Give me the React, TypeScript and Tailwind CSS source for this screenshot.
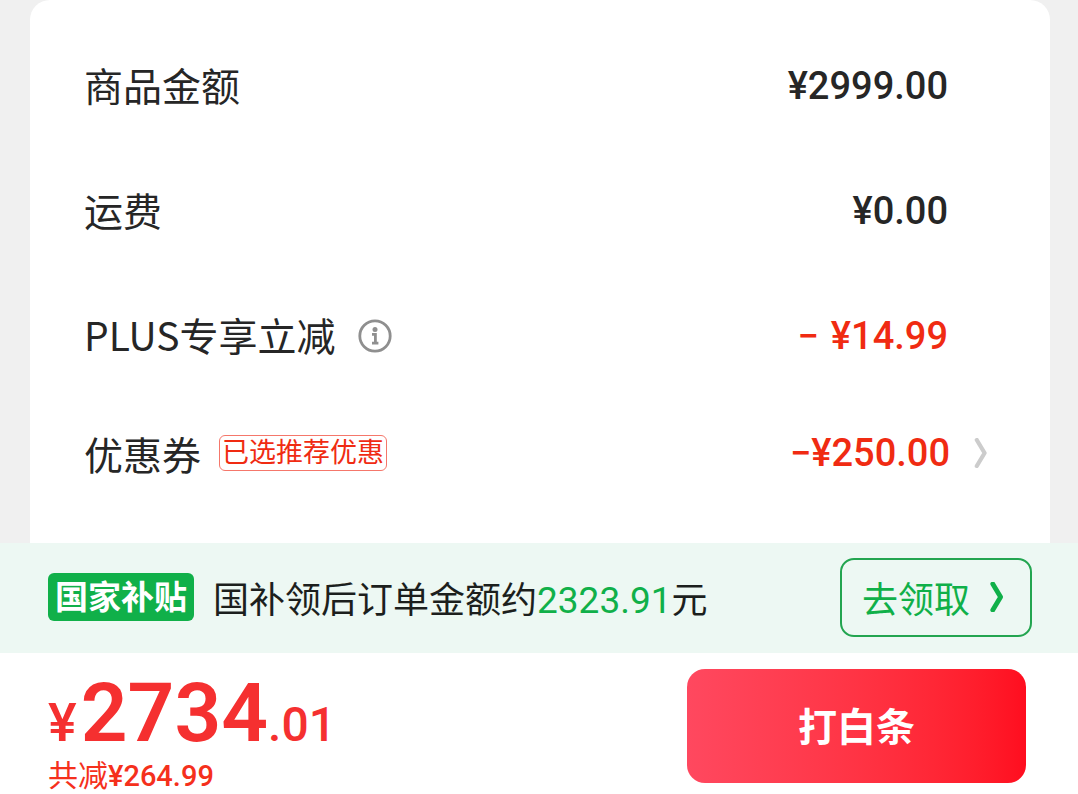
import type { ReactNode } from 'react';

function Amount({ children, red = false }: { children: ReactNode; red?: boolean }) {
  return (
    <dd
      className={`flex items-center whitespace-pre font-['Roboto','Noto_Sans_CJK_SC',sans-serif] text-[38px] font-medium leading-[48px] ${
        red ? 'text-[#f02b12]' : 'text-[#262626]'
      }`}
    >
      {children}
    </dd>
  );
}

function InfoIcon() {
  return (
    <svg viewBox="0 0 34 34" className="size-[34px]" aria-hidden="true">
      <circle cx="17" cy="17" r="15.2" fill="none" stroke="#8f8f8f" strokeWidth="2.8" />
      <circle cx="17" cy="10.6" r="2.5" fill="#8f8f8f" />
      <path d="M14 15.3H17.4V24.2M14 24.2H20.4" fill="none" stroke="#8f8f8f" strokeWidth="2.8" />
    </svg>
  );
}

function Chevron({ className, width }: { className: string; width: number }) {
  return (
    <svg viewBox="0 0 14 30" className={className} aria-hidden="true">
      <path d="M2.8 2L10.6 15L2.8 28" fill="none" stroke="currentColor" strokeWidth={width} strokeLinecap="round" strokeLinejoin="round" />
    </svg>
  );
}

export default function App() {
  return (
    <main className="flex min-h-screen flex-col bg-[#f0f0f0] font-['Noto_Sans_CJK_SC',sans-serif] text-[#262626]">
      <dl className="mr-7 ml-[30px] rounded-t-[20px] bg-white pt-[23px] pr-[102px] pb-[35px] pl-[54px] text-[39px] leading-[56px]">
        <div className="flex h-[125px] items-center justify-between">
          <dt className="pb-1">商品金额</dt>
          <Amount>¥2999.00</Amount>
        </div>
        <div className="flex h-[125px] items-center justify-between">
          <dt className="pb-1">运费</dt>
          <Amount>¥0.00</Amount>
        </div>
        <div className="flex h-[125px] items-center justify-between">
          <dt className="flex items-center gap-[22px]">
            <span className="pb-1">PLUS专享立减</span>
            <button type="button" aria-label="优惠说明">
              <InfoIcon />
            </button>
          </dt>
          <Amount red>
            <span className="mr-3">−</span>¥14.99
          </Amount>
        </div>
        <div className="-mr-10 flex h-[110px] items-center justify-between">
          <dt className="flex items-center gap-[18px]">
            <span>优惠券</span>
            <span className="rounded-md border border-[#f5776b] px-[2px] pb-1 text-[27px] leading-[30px] text-[#f02b12]">已选推荐优惠</span>
          </dt>
          <Amount red>
            −¥250.00
            <button type="button" aria-label="选择优惠券" className="ml-6 text-[#cccccc]">
              <Chevron className="h-[30px] w-[14px]" width={4.2} />
            </button>
          </Amount>
        </div>
      </dl>

      <section className="flex h-[110px] items-center bg-[#edf8f3] pr-[46px] pb-0.5 pl-12">
        <strong className="rounded-md bg-[#10b049] px-[7px] pb-1 text-[33px] leading-[44px] font-bold text-white">国家补贴</strong>
        <p className="ml-[19px] pt-1 text-[36px] leading-[52px] text-[#1c1f1d]">
          国补领后订单金额约
          <span className="font-['Roboto',sans-serif] text-[37px] text-[#10b049]">2323.91</span>元
        </p>
        <button
          type="button"
          className="ml-auto flex h-[79px] w-48 items-center gap-5 rounded-[14px] border-2 border-[#23a550] pl-5 text-[36px] leading-[52px] text-[#10b049]"
        >
          去领取
          <Chevron className="h-[30px] w-[14px]" width={4.8} />
        </button>
      </section>

      <footer className="flex flex-1 items-start justify-between bg-white pt-4 pr-[52px] pl-12">
        <div className="mt-1 text-[#f53030]">
          <p className="flex items-baseline font-['Roboto',sans-serif] text-[48px] leading-[50px] font-medium">
            <span className="text-[54px]">¥</span>
            <span className="ml-1 text-[82px] leading-[80px] font-semibold">2734</span>.01
          </p>
          <p className="mt-0.5 text-[30px] leading-[36px] text-[#f5301c]">
            共减<span className="font-['Roboto',sans-serif] text-[29px] font-medium">¥264.99</span>
          </p>
        </div>
        <button
          type="button"
          className="h-[114px] w-[339px] rounded-[18px] bg-linear-to-r from-[#ff485f] to-[#ff0d1f] pb-1 text-[39px] font-bold text-white"
        >
          打白条
        </button>
      </footer>
    </main>
  );
}
